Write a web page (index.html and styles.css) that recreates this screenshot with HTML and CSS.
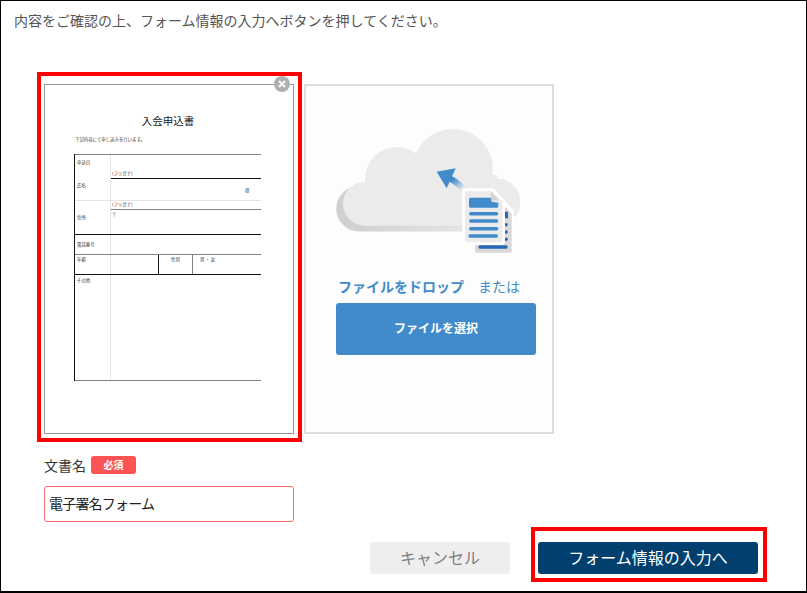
FILE: index.html
```html
<!DOCTYPE html>
<html lang="ja">
<head>
    <meta charset="UTF-8">
    <meta name="viewport" content="width=device-width, initial-scale=1.0">
    <title>フォーム情報の入力</title>
    <link rel="stylesheet" href="styles.css">
</head>
<body>
    <div class="frame">
        <p class="lead">内容をご確認の上、フォーム情報の入力へボタンを押してください。</p>

        <div class="cards">
            <!-- 文書プレビュー -->
            <div class="card preview">
                <svg class="doc" viewBox="0 0 248 348" width="248" height="348">
                    <text class="doc-title" x="123" y="40" text-anchor="middle">入会申込書</text>
                    <text class="doc-text" x="30" y="56">下記内容にて申し込みを行います。</text>
                    <g class="line-light">
                        <line x1="65.500" y1="70" x2="65.500" y2="295"/>
                        <line x1="30" y1="115.500" x2="216" y2="115.500"/>
                    </g>
                    <g class="line-mid">
                        <line x1="29" y1="69.500" x2="216" y2="69.500"/>
                        <line x1="66" y1="124.500" x2="216" y2="124.500"/>
                        <line x1="30" y1="169.500" x2="216" y2="169.500"/>
                        <line x1="147.500" y1="170" x2="147.500" y2="189"/>
                        <line x1="29" y1="295.500" x2="216" y2="295.500"/>
                    </g>
                    <g class="line-dark">
                        <line x1="66" y1="93.500" x2="216" y2="93.500"/>
                        <line x1="30" y1="149.500" x2="216" y2="149.500"/>
                        <line x1="30" y1="189.500" x2="216" y2="189.500"/>
                        <line x1="113.500" y1="170" x2="113.500" y2="190"/>
                        <line x1="29.500" y1="69" x2="29.500" y2="296"/>
                    </g>
                    <text class="doc-text" x="32" y="79">申込日</text>
                    <text class="doc-text" x="32" y="102">氏名</text>
                    <text class="doc-text" x="67" y="90">(フリガナ)</text>
                    <text class="doc-text" x="200" y="107">様</text>
                    <text class="doc-text" x="67" y="121">(フリガナ)</text>
                    <text class="doc-text" x="67" y="131">〒</text>
                    <text class="doc-text" x="32" y="134">住所</text>
                    <text class="doc-text" x="32" y="161">電話番号</text>
                    <text class="doc-text" x="32" y="176">年齢</text>
                    <text class="doc-text" x="126" y="176">性別</text>
                    <text class="doc-text" x="155" y="176">男 ・ 女</text>
                    <text class="doc-text" x="32" y="197">その他</text>
                </svg>
                <span class="close">
                    <svg viewBox="0 0 16 16" width="16" height="16">
                        <circle cx="8" cy="8" r="8" fill="#b0b0b0"/>
                        <path d="M5 5l6 6M11 5l-6 6" stroke="#f2f2f2" stroke-width="2.400"/>
                    </svg>
                </span>
                <div class="highlight highlight-preview"></div>
            </div>

            <!-- ファイルドロップ -->
            <div class="card drop">
                <svg class="cloud" viewBox="0 0 190 130" width="190" height="130">
                    <defs>
                        <linearGradient id="shade" x1="0" x2="1" y1="0" y2="0">
                            <stop offset="0" stop-color="#cfcfcf"/>
                            <stop offset="1" stop-color="#e6e6e6"/>
                        </linearGradient>
                        <linearGradient id="tail" x1="0" x2="1" y1="0" y2="1">
                            <stop offset="0.2" stop-color="#428bca"/>
                            <stop offset="1" stop-color="#428bca" stop-opacity="0"/>
                        </linearGradient>
                    </defs>
                    <path fill="url(#shade)" d="M29 106.500a22.750 22.750 0 0 1 0-45.500h121v45.500z"/>
                    <g fill="#ebebeb">
                        <circle cx="35" cy="78.700" r="22"/>
                        <circle cx="67" cy="54" r="32"/>
                        <circle cx="123" cy="44" r="40"/>
                        <circle cx="167" cy="77" r="23.500"/>
                        <rect x="35" y="50" width="132" height="50.700"/>
                    </g>
                    <!-- 矢印 -->
                    <path d="M119 53c6 3 10 6 14 11" fill="none" stroke="url(#tail)" stroke-width="6"/>
                    <path d="M106.700 46.700l19-3.400-9 20z" fill="#428bca"/>
                    <!-- 奥の書類 -->
                    <path d="M165 66l19 19.500v38a5 5 0 0 1-5 5h-32a5 5 0 0 1-4-3v-59.500z" fill="#fff"/>
                    <path d="M150 80h23l8.700 8.700v37.500a1.500 1.500 0 0 1-1.500 1.500h-33.700a1.500 1.500 0 0 1-1.500-1.500v-46.200z" fill="#d9d9d9"/>
                    <g fill="#2a68b5">
                        <rect x="174.500" y="86.700" width="3.500" height="6.600"/>
                        <circle cx="176" cy="99.700" r="1.800"/>
                        <circle cx="176" cy="107" r="1.800"/>
                        <circle cx="176" cy="114.300" r="1.800"/>
                        <rect x="148.300" y="120.300" width="29.400" height="3.400" rx="1.700"/>
                    </g>
                    <!-- 手前の書類 -->
                    <path d="M135.300 63.300h28l11.700 12v41.700a3 3 0 0 1-3 3h-36.700a3 3 0 0 1-3-3v-50.700a3 3 0 0 1 3-3z" fill="#fff"/>
                    <path d="M136.500 66h25.200l10.600 10.700v39a1.500 1.500 0 0 1-1.500 1.500h-34.300a1.500 1.500 0 0 1-1.500-1.500v-48.200a1.500 1.500 0 0 1 1.500-1.500z" fill="#ebebeb"/>
                    <path d="M161 66.500l8 9h-8z" fill="#d4d4d4"/>
                    <path d="M140.500 72.700h20.500l.5 4 6.800 1v3.500a1.500 1.500 0 0 1-1.500 1.500h-26.300a1.500 1.500 0 0 1-1.500-1.500v-7a1.500 1.500 0 0 1 1.500-1.500z" fill="#428bca"/>
                    <g fill="#428bca">
                        <rect x="139" y="87" width="29.300" height="3.400" rx="1.700"/>
                        <rect x="139" y="94.300" width="29.300" height="3.400" rx="1.700"/>
                        <rect x="139" y="102" width="29.300" height="3.400" rx="1.700"/>
                        <rect x="138.300" y="109.300" width="29.700" height="3.400" rx="1.700"/>
                    </g>
                </svg>
                <p class="drop-text"><b>ファイルをドロップ</b><span>または</span></p>
                <button class="btn-file">ファイルを選択</button>
            </div>
        </div>

        <div class="field">
            <div class="field-label">文書名<span class="badge">必須</span></div>
            <input class="field-input" type="text" value="電子署名フォーム">
        </div>

        <div class="actions">
            <button class="btn btn-cancel">キャンセル</button>
            <button class="btn btn-next">フォーム情報の入力へ<span class="highlight highlight-next"></span></button>
        </div>
    </div>
</body>
</html>
```

FILE: styles.css
```css
* {
    box-sizing: border-box;
    margin: 0;
    padding: 0;
}

body {
    font-family: 'Noto Sans CJK JP', 'Noto Sans', sans-serif;
    background-color: #fff;
    width: 807px;
    height: 593px;
    overflow: hidden;
}

.frame {
    height: 593px;
    border: 1px solid #000;
    border-bottom-width: 2px;
    padding: 9px 0 0 13px;
}

.lead {
    font-size: 14px;
    line-height: 20px;
    color: #555;
}

.cards {
    display: flex;
    gap: 10px;
    margin: 54px 0 0 30px;
}

.card {
    position: relative;
    width: 250px;
    height: 350px;
}

.preview {
    border: 1px solid #999;
    background-color: #fff;
}

.doc {
    display: block;
}

.doc-title {
    font-size: 10.500px;
    fill: #222;
}

.doc-text {
    font-size: 4.400px;
    fill: #333;
}

.line-light line {
    stroke: #e4e4e4;
    stroke-width: 1;
}

.line-mid line {
    stroke: #808080;
    stroke-width: 1;
}

.line-dark line {
    stroke: #111;
    stroke-width: 1;
}

.close {
    position: absolute;
    top: -9px;
    right: 3px;
    width: 16px;
    height: 16px;
}

.close svg {
    display: block;
}

.highlight {
    position: absolute;
    border: 4px solid #f00;
    pointer-events: none;
}

.highlight-preview {
    top: -13px;
    left: -8px;
    right: -9px;
    bottom: -9px;
}

.highlight-next {
    top: -15px;
    left: -7px;
    right: -9px;
    bottom: -8px;
}

.drop {
    border: 2px solid #ddd;
    background-color: #fdfdfd;
    padding-top: 39px;
}

.cloud {
    display: block;
    margin-left: 24px;
}

.drop-text {
    margin: 21px 0 0 32px;
    font-size: 14px;
    line-height: 20px;
    color: #428bca;
}

.drop-text span {
    margin-left: 14px;
}

.btn-file {
    display: block;
    width: 200px;
    height: 52px;
    margin: 7px 0 0 30px;
    padding-bottom: 3px;
    border: none;
    border-radius: 3px;
    background-color: #428bca;
    color: #fff;
    font-family: inherit;
    font-size: 12px;
    font-weight: bold;
}

.field {
    width: 250px;
    margin: 22px 0 0 30px;
}

.field-label {
    display: flex;
    align-items: center;
    gap: 5px;
    font-size: 14px;
    line-height: 18px;
    color: #333;
}

.badge {
    width: 45px;
    height: 18px;
    border-radius: 3px;
    background-color: #fc5454;
    color: #fff;
    font-size: 10px;
    font-weight: bold;
    line-height: 18px;
    text-align: center;
}

.field-input {
    display: block;
    width: 250px;
    height: 36px;
    margin-top: 12px;
    padding: 0 4px 2px;
    border: 1px solid #f87070;
    border-radius: 3px;
    font-family: inherit;
    font-size: 14px;
    letter-spacing: -0.8px;
    color: #222;
}

.actions {
    display: flex;
    gap: 28px;
    margin: 20px 0 0 356px;
}

.btn {
    position: relative;
    height: 32px;
    padding-bottom: 2px;
    border: none;
    border-radius: 3px;
    font-family: inherit;
    font-size: 16px;
}

.btn-cancel {
    width: 140px;
    background-color: #eee;
    color: #808080;
}

.btn-next {
    width: 220px;
    background-color: #003f6e;
    color: #fff;
}
```
